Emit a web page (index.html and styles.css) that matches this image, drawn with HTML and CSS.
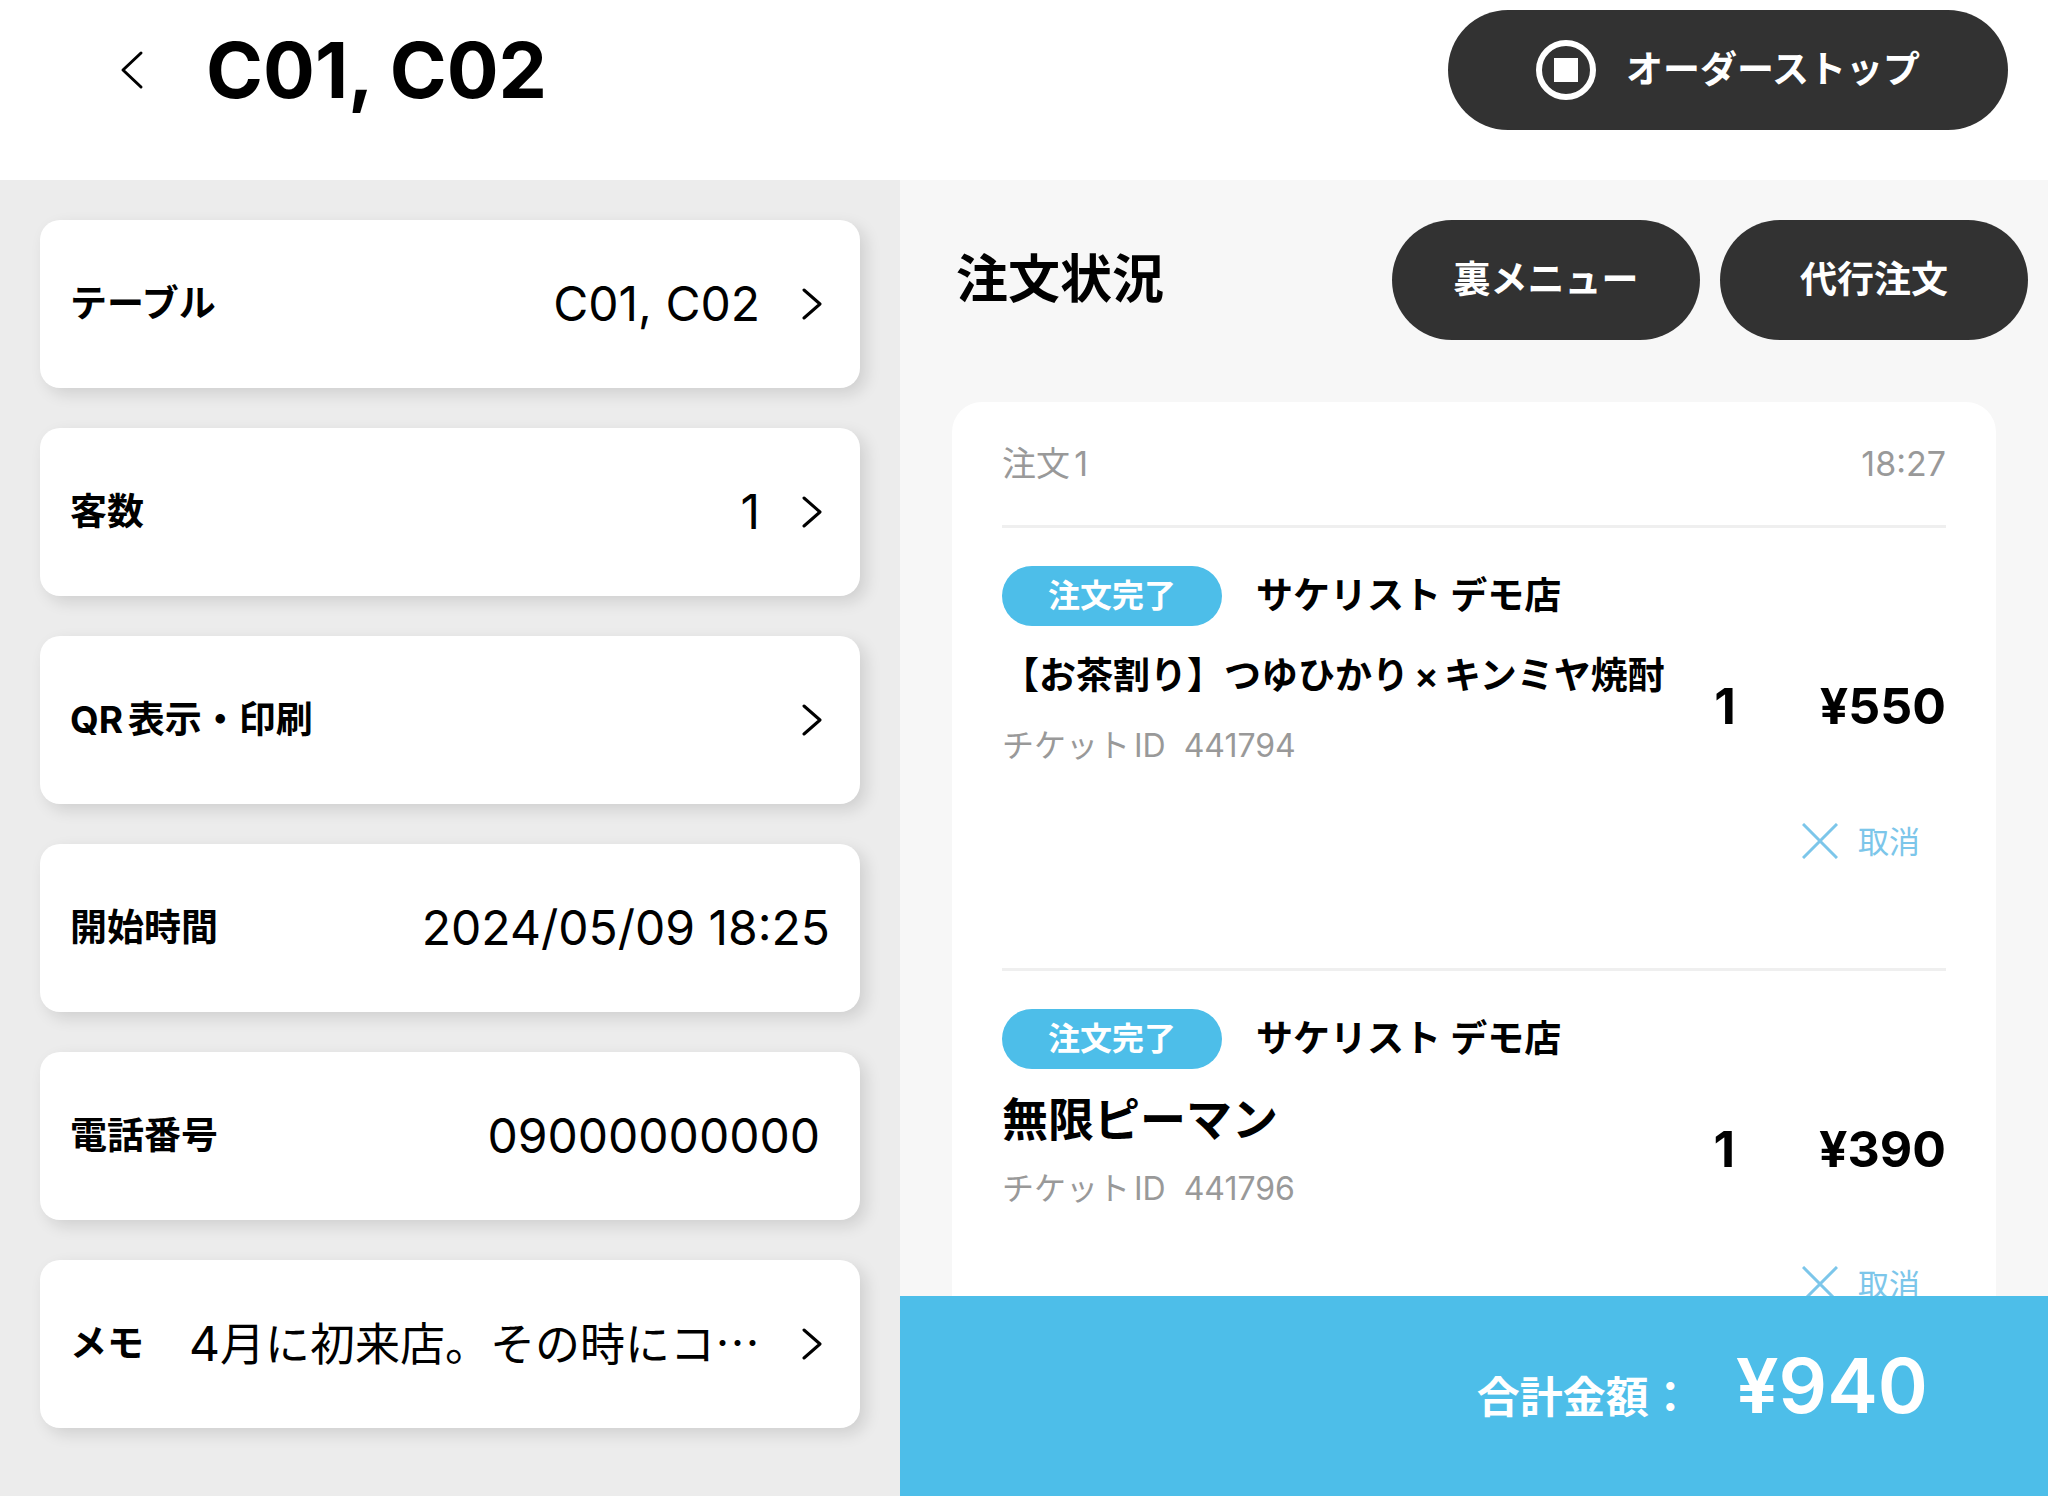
FILE: index.html
```html
<!DOCTYPE html>
<html lang="ja">
<head>
<meta charset="UTF-8">
<meta name="viewport" content="width=device-width, initial-scale=1.0">
<title>C01, C02</title>
<link rel="stylesheet" href="styles.css">
</head>
<body>

<div class="page">
  <header class="header">
    <button class="back" aria-label="戻る">
      <svg width="24" height="40" viewBox="0 0 24 40"><path d="M21 3 L3 20 L21 37"/></svg>
    </button>
    <h1>C01, C02</h1>
    <button class="pill order-stop">
      <svg width="60" height="60" viewBox="0 0 60 60">
        <circle cx="30" cy="30" r="27" fill="none" stroke="#fff" stroke-width="6"/>
        <rect x="18" y="18" width="24" height="24" fill="#fff"/>
      </svg>
      オーダーストップ
    </button>
  </header>

  <main class="info">
    <button class="row">
      <span class="label">テーブル</span>
      <span class="value">C01, C02</span>
      <svg class="chevron" width="20" height="32" viewBox="0 0 20 32"><path d="M2 2 L18 16 L2 30"/></svg>
    </button>
    <button class="row">
      <span class="label">客数</span>
      <span class="value">1</span>
      <svg class="chevron" width="20" height="32" viewBox="0 0 20 32"><path d="M2 2 L18 16 L2 30"/></svg>
    </button>
    <button class="row">
      <span class="label">QR表示・印刷</span>
      <svg class="chevron" width="20" height="32" viewBox="0 0 20 32"><path d="M2 2 L18 16 L2 30"/></svg>
    </button>
    <div class="row">
      <span class="label">開始時間</span>
      <span class="value">2024/05/09 18:25</span>
    </div>
    <div class="row">
      <label class="label" for="tel">電話番号</label>
      <input class="value tel" type="tel" id="tel" value="09000000000">
    </div>
    <button class="row">
      <span class="label">メモ</span>
      <span class="value memo"><span class="num">4</span>月に初来店。その時にコ<span class="dots">…</span></span>
      <svg class="chevron" width="20" height="32" viewBox="0 0 20 32"><path d="M2 2 L18 16 L2 30"/></svg>
    </button>
  </main>

  <section class="orders">
    <div class="orders-head">
      <h2>注文状況</h2>
      <button class="pill">裏メニュー</button>
      <button class="pill">代行注文</button>
    </div>

    <div class="order-list">
      <div class="order-card">
        <div class="order-meta">
          <span>注文1</span>
          <span>18:27</span>
        </div>

        <div class="item">
          <div class="item-shop">
            <span class="badge">注文完了</span>
            <span class="shop">サケリスト デモ店</span>
          </div>
          <div class="item-body">
            <div class="item-text">
              <div class="name">【お茶割り】つゆひかり<span class="times">×</span>キンミヤ焼酎</div>
              <div class="ticket">チケットID&nbsp; 441794</div>
            </div>
            <span class="qty">1</span>
            <span class="price">¥550</span>
          </div>
          <button class="cancel">
            <svg width="36" height="36" viewBox="0 0 36 36"><path d="M1 1 L35 35 M35 1 L1 35"/></svg>
            取消
          </button>
        </div>

        <div class="item">
          <div class="item-shop">
            <span class="badge">注文完了</span>
            <span class="shop">サケリスト デモ店</span>
          </div>
          <div class="item-body">
            <div class="item-text">
              <div class="name large">無限ピーマン</div>
              <div class="ticket">チケットID&nbsp; 441796</div>
            </div>
            <span class="qty">1</span>
            <span class="price">¥390</span>
          </div>
          <button class="cancel">
            <svg width="36" height="36" viewBox="0 0 36 36"><path d="M1 1 L35 35 M35 1 L1 35"/></svg>
            取消
          </button>
        </div>
      </div>
    </div>

    <footer class="total">
      <span class="total-label">合計金額：</span>
      <span class="total-price">¥940</span>
    </footer>
  </section>
</div>

</body>
</html>
```

FILE: styles.css
```css
* {
  box-sizing: border-box;
}
body {
  margin: 0;
  font-family: Inter, "Noto Sans CJK JP", sans-serif;
  text-autospace: normal;
  color: #000;
  background-color: #fff;
}
button {
  font-family: inherit;
  color: inherit;
  border: none;
  padding: 0;
  background: none;
  cursor: pointer;
}
.page {
  display: grid;
  grid-template-columns: 225fr 287fr;
  grid-template-rows: 180px 1fr;
  height: 100vh;
}

/* header */
.header {
  grid-column: 1 / 3;
  display: flex;
  align-items: flex-start;
  padding: 10px 40px 0 120px;
}
.back {
  display: flex;
  align-items: center;
  height: 120px;
  margin-right: 62px;
}
.back path,
.chevron path {
  fill: none;
  stroke: #000;
  stroke-width: 3;
  stroke-linecap: round;
  stroke-linejoin: round;
}
h1 {
  margin: 0;
  font-size: 77px;
  line-height: 120px;
  font-weight: 700;
}
.pill {
  display: flex;
  align-items: center;
  justify-content: center;
  width: 308px;
  height: 120px;
  border-radius: 60px;
  background-color: #323232;
  color: #fff;
  font-size: 37px;
  line-height: 38px;
  font-weight: 600;
}
.order-stop {
  width: 560px;
  gap: 30px;
  margin-left: auto;
}

/* left column */
.info {
  display: flex;
  flex-direction: column;
  gap: 40px;
  padding: 40px;
  background-color: #ececec;
}
.row {
  display: flex;
  align-items: center;
  height: 168px;
  padding: 0 30px;
  border-radius: 20px;
  background-color: #fff;
  box-shadow: 6px 6px 16px rgba(0,0,0,0.12);
}
.label {
  font-size: 37px;
  line-height: 38px;
  font-weight: 700;
  white-space: nowrap;
}
.value {
  margin-left: auto;
  font-size: 48px;
  line-height: 60px;
  white-space: nowrap;
}
.chevron {
  margin: 0 8px 0 42px;
}
.label + .chevron {
  margin-left: auto;
}
.tel {
  width: 400px;
  padding: 0 10px 0 0;
  border: none;
  font-family: inherit;
  color: inherit;
  text-align: right;
}
.memo {
  font-size: 45px;
  text-autospace: no-autospace;
}
.memo .num {
  font-size: 48px;
}
.memo .dots {
  font-family: "Noto Sans CJK JP", sans-serif;
  line-height: 45px;
}

/* right column */
.orders {
  display: flex;
  flex-direction: column;
  min-height: 0;
  background-color: #f7f7f7;
}
.orders-head {
  display: flex;
  align-items: center;
  gap: 20px;
  padding: 40px 20px 0 56px;
}
h2 {
  margin: 0 auto 0 0;
  font-size: 52px;
  line-height: 60px;
  font-weight: 600;
}
.order-list {
  flex: 1;
  min-height: 0;
  overflow: hidden;
  padding: 62px 52px 0;
}
.order-card {
  padding: 0 50px;
  border-radius: 30px;
  background-color: #fff;
}
.order-meta {
  display: flex;
  justify-content: space-between;
  font-size: 34px;
  line-height: 123px;
  color: #999;
}
.item {
  display: flex;
  flex-direction: column;
  border-top: 3px solid #efefef;
  padding: 38px 0 77px;
}
.item-shop {
  display: flex;
  align-items: center;
  gap: 34px;
}
.badge {
  width: 220px;
  border-radius: 30px;
  background-color: #4dbee9;
  color: #fff;
  font-size: 32px;
  line-height: 60px;
  font-weight: 600;
  text-align: center;
}
.shop {
  font-size: 37px;
  line-height: 60px;
  font-weight: 600;
}
.item-body {
  display: flex;
  align-items: center;
  margin-top: 20px;
}
.item-text {
  margin-right: auto;
}
.name {
  font-size: 37px;
  line-height: 60px;
  font-weight: 600;
}
.name.large {
  font-size: 46px;
}
.times {
  padding: 0 5px;
}
.ticket {
  margin-top: 20px;
  font-size: 32px;
  line-height: 40px;
  color: #999;
}
.qty,
.price {
  font-size: 50px;
  font-weight: 700;
}
.price {
  margin-left: 84px;
}
.cancel {
  display: flex;
  align-items: center;
  align-self: flex-end;
  gap: 20px;
  height: 100px;
  margin-top: 25px;
  padding-right: 26px;
  color: #7cc6ea;
  font-size: 31px;
  line-height: 31px;
}
.cancel path {
  stroke: #7cc6ea;
  stroke-width: 3;
}
.total {
  display: flex;
  align-items: baseline;
  justify-content: flex-end;
  gap: 44px;
  height: 200px;
  padding: 44px 120px 0 0;
  background-color: #4dbee9;
  color: #fff;
  font-weight: 600;
}
.total-label {
  font-size: 43px;
}
.total-price {
  font-size: 76px;
  line-height: 90px;
}
```
